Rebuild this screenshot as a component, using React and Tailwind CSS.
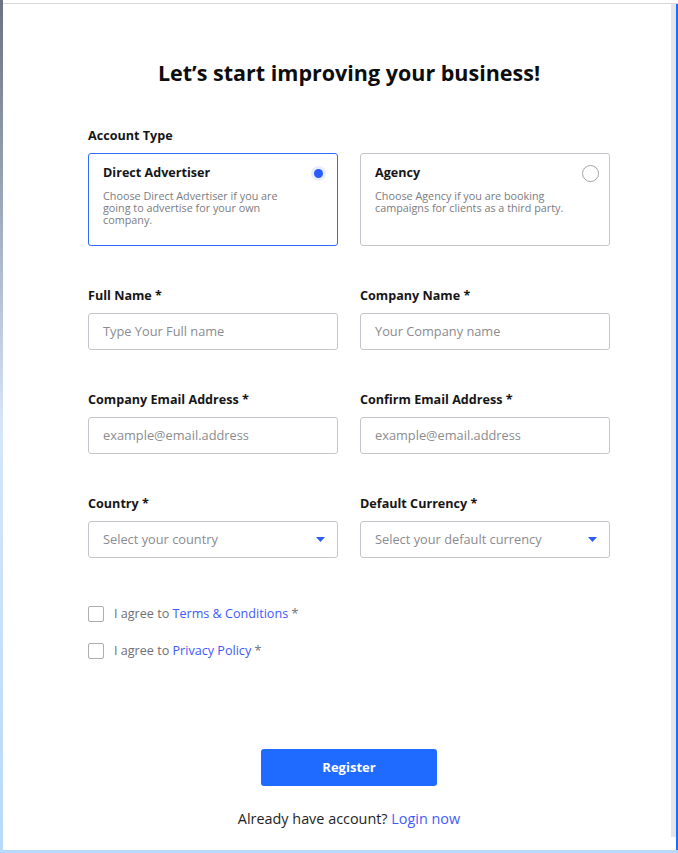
import React from 'react'

const font = { fontFamily: '"Open Sans", "Noto Sans", sans-serif' }

const Caret = () => (
  <svg width="9" height="5" viewBox="0 0 9 5" className="shrink-0">
    <path d="M0 0h9L4.5 5z" fill="#2f5cff" />
  </svg>
)

const AccountCard = ({ title, text, selected }) => (
  <div
    className={`h-[93px] rounded-[3px] border pl-[14px] pr-[10px] pt-[10px] ${
      selected ? 'border-[#2d6bff]' : 'border-[#c4c4cc]'
    }`}
  >
    <div className="flex items-center justify-between">
      <p className="text-[12.6px] font-bold leading-[18px] text-[#161616]">{title}</p>
      <span className="flex h-[18px] w-[18px] items-center justify-center">
        {selected ? (
          <span className="flex h-[15px] w-[15px] items-center justify-center rounded-full bg-[#e8eeff]">
            <span className="h-[9px] w-[9px] rounded-full bg-[#2a5cff]" />
          </span>
        ) : (
          <span className="h-[17px] w-[17px] rounded-full border border-[#a3a3a8]" />
        )}
      </span>
    </div>
    <p className="mt-[8px] w-[200px] text-[10.8px] leading-[12px] text-[#7b7b80]">{text}</p>
  </div>
)

const Field = ({ label, placeholder, select }) => (
  <div>
    <p className="pt-[1px] text-[12.6px] font-bold leading-[18px] text-[#161616]">{label}</p>
    <div className="mt-[8px] flex h-[37px] items-center justify-between rounded-[3px] border border-[#c4c4cc] pl-[14px] pr-[12px]">
      <span className="text-[12.8px] text-[#8b8b90]">{placeholder}</span>
      {select && <Caret />}
    </div>
  </div>
)

const Agree = ({ link }) => (
  <label className="flex items-center gap-[10px] text-[12.6px] leading-[18px] text-[#6f6f74]">
    <span className="h-[16px] w-[16px] rounded-[2px] border border-[#acacb2]" />
    <span>
      I agree to <span className="text-[#4058ff]">{link}</span> *
    </span>
  </label>
)

export default function App() {
  return (
    <div className="flex h-[853px] w-[678px] flex-col bg-[#b9d8fb]" style={font}>
      <div className="flex h-[850px]">
        <div className="w-[3px] bg-gradient-to-b from-[#6b7480] via-[#d6e6f8] to-[#b9d8fb]" />
        <div className="flex flex-1 flex-col bg-white">
          <div className="h-[3px]" />
          <div className="h-px bg-[#d7d7d7]" />
          <div className="flex flex-1">
            <main className="flex w-[668px] flex-col pl-[85px] pr-[61px] pt-[55px]">
              <h1 className="text-center text-[21.5px] font-bold leading-[28px] text-[#0d0d0d]">
                Let’s start improving your business!
              </h1>

              <p className="mt-[40px] text-[12.6px] font-bold leading-[18px] text-[#161616]">Account Type</p>
              <div className="mt-[8px] grid grid-cols-2 gap-[22px]">
                <AccountCard
                  selected
                  title="Direct Advertiser"
                  text="Choose Direct Advertiser if you are going to advertise for your own company."
                />
                <AccountCard
                  title="Agency"
                  text="Choose Agency if you are booking campaigns for clients as a third party."
                />
              </div>

              <div className="mt-[40px] grid grid-cols-2 gap-x-[22px] gap-y-[40px]">
                <Field label="Full Name *" placeholder="Type Your Full name" />
                <Field label="Company Name *" placeholder="Your Company name" />
                <Field label="Company Email Address *" placeholder="example@email.address" />
                <Field label="Confirm Email Address *" placeholder="example@email.address" />
                <Field label="Country *" placeholder="Select your country" select />
                <Field label="Default Currency *" placeholder="Select your default currency" select />
              </div>

              <div className="mt-[47px] flex flex-col gap-[19px]">
                <Agree link="Terms & Conditions" />
                <Agree link="Privacy Policy" />
              </div>

              <div className="mt-[89px] flex flex-col items-center">
                <button className="h-[37px] w-[176px] rounded-[3px] bg-[#1f6bff] text-[13px] font-bold text-white">
                  Register
                </button>
                <p className="mt-[23px] text-[14.4px] leading-[20px] text-[#1e1e1e]">
                  Already have account? <span className="text-[#3f5cf6]">Login now</span>
                </p>
              </div>
            </main>
            <div className="mb-[13px] w-[5px] bg-[#e6e6e6]" />
            <div className="w-[2px] bg-[#1f6bff]" />
          </div>
        </div>
      </div>
    </div>
  )
}
